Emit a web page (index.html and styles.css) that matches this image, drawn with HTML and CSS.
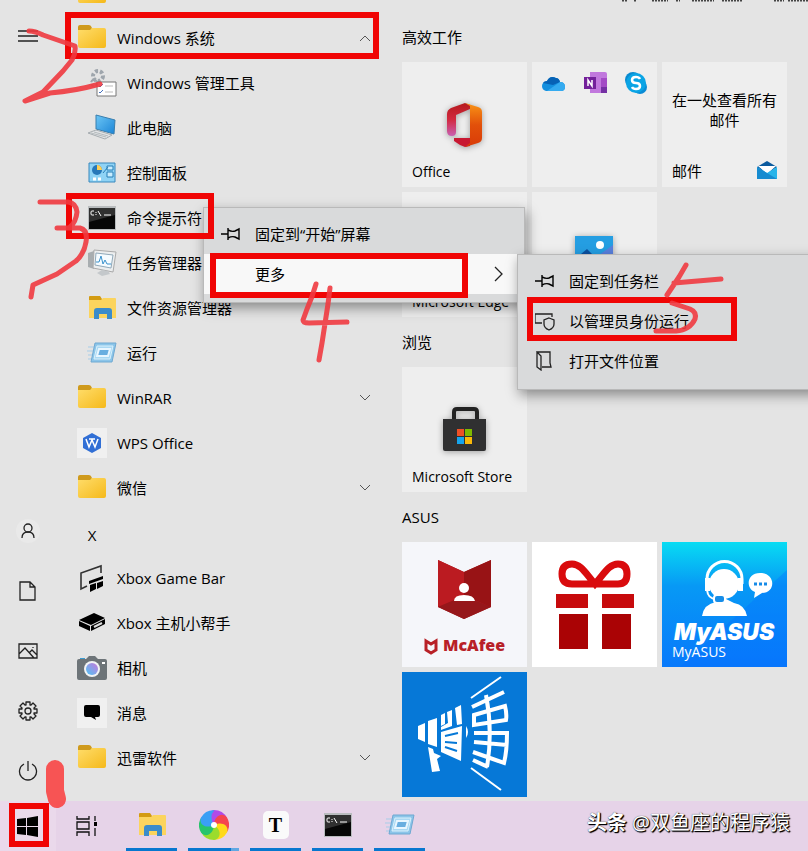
FILE: index.html
```
<!DOCTYPE html>
<html lang="zh-CN">
<head>
  <meta charset="UTF-8">
  <meta name="viewport" content="width=device-width, initial-scale=1.0">
  <title>开始</title>
  <link rel="stylesheet" href="styles.css">
</head>
<body>
  <!-- shared icons -->
  <svg class="defs" width="0" height="0" aria-hidden="true">
    <defs>
      <linearGradient id="folder-fill" x1="0" y1="0" x2="1" y2="1">
        <stop offset="0" stop-color="#ffdd6b"/><stop offset="1" stop-color="#f5b91a"/>
      </linearGradient>
      <linearGradient id="blue-fill" x1="0" y1="0" x2="1" y2="1">
        <stop offset="0" stop-color="#6cc6f5"/><stop offset="1" stop-color="#1b84d6"/>
      </linearGradient>
      <symbol id="folder" viewBox="0 0 30 30">
        <path d="M1 4q0-2 2-2h9q2 0 3 3l-2 4H1z" fill="#cf9a1c"/>
        <path d="M1 7h12l2-2h12q2 0 2 2v16q0 2-2 2H3q-2 0-2-2z" fill="url(#folder-fill)"/>
      </symbol>
      <symbol id="explorer" viewBox="0 0 30 30">
        <path d="M2 4q0-1 1-1h10l2 3v4H2z" fill="#d39b12"/>
        <path d="M2 7h12l2-2h12q1 0 1 1v19H2z" fill="#fbd45e"/>
        <path d="M7 26v-8q0-3 3-3h12q3 0 3 3v8h-5v-5h-8v5z" fill="#3b8ccb"/>
      </symbol>
      <symbol id="cmd" viewBox="0 0 30 30">
        <path d="M1 3h28v24H1z" fill="#b9bcbe"/>
        <path d="M2 5h26v21H2z" fill="#070707"/>
        <path d="M2 5h26v7L2 19z" fill="#303030"/>
        <path d="M7 8H5q-1 0-1 1v2q0 1 1 1h2M9 9v1M9 11v1M11 8l3 5M17 12h7" fill="none" stroke="#fff"/>
      </symbol>
      <symbol id="run" viewBox="0 0 30 30">
        <path d="M1 9h6M0 13h6M1 17h5M1 21h5" stroke="#a7cde8"/>
        <path d="M8 5h21l-4 19H4z" fill="#8cc5e9" stroke="#6fa9d2"/>
        <path d="M10 8h16l-3 13H7z" fill="#a9d8f3" stroke="#d9f0fb"/>
        <path d="M12 11h11l-2 7H10z" fill="#69aee0" stroke="#e8f6ff" stroke-width="2"/>
      </symbol>
      <symbol id="pin" viewBox="0 0 20 20">
        <path d="M0 10h7M7 4v12M7 6q4 2 7 1l4-2v10l-4-2q-3-1-7 1" fill="none" stroke="currentColor" stroke-width="1.4"/>
      </symbol>
      <symbol id="chevron" viewBox="0 0 12 12">
        <path d="M1 3l5 5 5-5" fill="none" stroke="#555"/>
      </symbol>
    </defs>
  </svg>

  <main class="start-menu">
    <nav class="rail" aria-label="开始">
      <button class="rail-btn rail-menu" aria-label="展开">
        <svg width="20" height="20" viewBox="0 0 20 20"><path d="M0 4h20M0 9h20M0 14h20"/></svg>
      </button>
      <button class="rail-btn" aria-label="帐户">
        <svg class="avatar" width="24" height="24" viewBox="0 0 24 24"><circle cx="12" cy="9" r="4"/><path d="M6 19q0-6 6-6t6 6"/></svg>
      </button>
      <button class="rail-btn" aria-label="文档">
        <svg width="20" height="20" viewBox="0 0 20 20"><path d="M2 1h10l5 5v13H2zM12 1v5h5"/></svg>
      </button>
      <button class="rail-btn" aria-label="图片">
        <svg width="20" height="20" viewBox="0 0 20 20"><path d="M1 3h18v14H1zM1 13l6-6 9 10M11 12l3-3 5 5"/><path d="M15 6v1"/></svg>
      </button>
      <button class="rail-btn" aria-label="设置">
        <svg width="20" height="20" viewBox="0 0 20 20"><circle cx="10" cy="10" r="3"/><path d="M8 4L8 1H12L12 4 13 4 15 2 18 5 16 7 16 8H19V12H16L16 13 18 15 15 18 13 16 12 16V19H8V16L7 16 5 18 2 15 4 13 4 12H1V8H4L4 7 2 5 5 2 7 4z" stroke-linejoin="round"/></svg>
      </button>
      <button class="rail-btn" aria-label="电源">
        <svg width="20" height="20" viewBox="0 0 20 20"><path d="M10 0v10M6 3a8.500 8.500 0 1 0 8 0"/></svg>
      </button>
    </nav>

    <section class="apps" aria-label="所有应用">
      <button class="app" aria-label="文件夹"><svg class="app-icon"><use href="#folder"/></svg></button>
      <button class="app"><svg class="app-icon"><use href="#folder"/></svg><span>Windows 系统</span><svg class="chevron up"><use href="#chevron"/></svg></button>
      <button class="app sub">
        <svg class="app-icon" viewBox="0 0 30 30">
          <g fill="none" stroke="#9fa6ad" stroke-dasharray="3 2"><circle cx="11" cy="8" r="5" stroke-width="4"/><circle cx="7" cy="15" r="3" stroke-width="2"/></g>
          <path d="M10 14h19v14H10z" fill="#fff" stroke="#777"/>
          <path d="M12 18l1 1 3-3M12 24l1 1 3-3" fill="none" stroke="#4771bd"/><path d="M18 18h8M18 24h8" stroke="#bbb"/>
        </svg><span>Windows 管理工具</span></button>
      <button class="app sub">
        <svg class="app-icon" viewBox="0 0 30 30">
          <path d="M9 2l19 5-1 14-18-5z" fill="url(#blue-fill)" stroke="#397eae"/>
          <path d="M1 20l8-3 16 5-7 4z" fill="#e3e5e7" stroke="#a7adb1"/><path d="M4 20l15 4M7 19l14 4" stroke="#b4babd"/>
        </svg><span>此电脑</span></button>
      <button class="app sub">
        <svg class="app-icon" viewBox="0 0 30 30">
          <path d="M2 5h26v19H2z" fill="#8fd3f5" stroke="#3888bd"/>
          <circle cx="10" cy="12" r="5" fill="#2778b9"/><path d="M10 12V7a5 5 0 0 1 5 5z" fill="#ffcf55"/>
          <path d="M16 15l5-6M20 8h6v4h-6zM20 14h6v5h-6z" fill="#c7edff" stroke="#277fb7"/><path d="M6 21h3M11 21h3" stroke="#fff" stroke-width="3"/>
        </svg><span>控制面板</span></button>
      <button class="app sub"><svg class="app-icon"><use href="#cmd"/></svg><span>命令提示符</span></button>
      <button class="app sub">
        <svg class="app-icon" viewBox="0 0 30 30">
          <path d="M1 5l6-2v18l-6-2z" fill="#a8adb0"/><path d="M7 2l22 2-3 20-20-4z" fill="#eceeef" stroke="#aaa"/>
          <path d="M9 5l17 2-2 13-16-3z" fill="#f5fbff" stroke="#91a9b9"/><path d="M9 14l3 0 2-6 2 8 2-4 2 4 4 0" fill="none" stroke="#3a92cd"/>
          <path d="M15 22l6 1 2 3-8 2-5-3z" fill="#c4c8cb"/>
        </svg><span>任务管理器</span></button>
      <button class="app sub"><svg class="app-icon"><use href="#explorer"/></svg><span>文件资源管理器</span></button>
      <button class="app sub"><svg class="app-icon"><use href="#run"/></svg><span>运行</span></button>
      <button class="app"><svg class="app-icon"><use href="#folder"/></svg><span>WinRAR</span><svg class="chevron"><use href="#chevron"/></svg></button>
      <button class="app">
        <svg class="app-icon plate" viewBox="0 0 30 30"><path d="M15 5l9 5v10l-9 5-9-5V10z" fill="#316fd5"/><path d="M9 11l3 8 3-7 3 7 3-8M12 11h6" fill="none" stroke="#fff" stroke-width="1.500"/></svg>
        <span>WPS Office</span></button>
      <button class="app"><svg class="app-icon"><use href="#folder"/></svg><span>微信</span><svg class="chevron"><use href="#chevron"/></svg></button>
      <h2 class="letter">X</h2>
      <button class="app">
        <svg class="app-icon" viewBox="0 0 30 30"><path d="M10 23l-6 3V10l20-7v7" fill="none" stroke="#333" stroke-width="1.600"/><path d="M12 18l14-5v3l-14 5zM13 22l6-2v6l-6 3zM20 20l6-2v5l-6 3z"/></svg>
        <span>Xbox Game Bar</span></button>
      <button class="app">
        <svg class="app-icon" viewBox="0 0 30 30"><path d="M2 12L17 5l11 5-14 7zM2 13l11 5v5L2 18zM14 18l14-7v5l-14 7z"/><path d="M17 19l8-4" stroke="#ddd" stroke-width="2"/></svg>
        <span>Xbox 主机小帮手</span></button>
      <button class="app">
        <svg class="app-icon" viewBox="0 0 30 30">
          <defs><linearGradient id="lens" x1="0" y1="1" x2="1" y2="0"><stop offset="0" stop-color="#4cc4f4"/><stop offset="1" stop-color="#c879dc"/></linearGradient></defs>
          <path d="M3 5h5v3H3z" fill="#3a9bd0"/><path d="M0 8q0-2 2-2h7l3-3h6l3 3h7q2 0 2 2v17q0 2-2 2H2q-2 0-2-2z" fill="#6d7478"/>
          <circle cx="15" cy="16" r="8" fill="#f2f4f5"/><circle cx="15" cy="16" r="6" fill="url(#lens)"/><path d="M25 10h3" stroke="#fff" stroke-width="2"/>
        </svg><span>相机</span></button>
      <button class="app">
        <svg class="app-icon plate" viewBox="0 0 30 30"><path d="M9 7h12q2 0 2 2v8q0 2-2 2h-3l1 3-5-3H9q-2 0-2-2V9q0-2 2-2z"/></svg>
        <span>消息</span></button>
      <button class="app"><svg class="app-icon"><use href="#folder"/></svg><span>迅雷软件</span><svg class="chevron"><use href="#chevron"/></svg></button>
      <h2 class="letter">Y</h2>
    </section>

    <section class="tiles" aria-label="磁贴">
      <h2 class="group-title">高效工作</h2>
      <div class="tile-grid">
        <a class="tile" href="#">
          <svg class="tile-art" viewBox="0 0 125 125">
            <defs><linearGradient id="office-l" x1="0" y1="0" x2="0" y2="1"><stop offset="0" stop-color="#b5191d"/><stop offset=".5" stop-color="#d2293f"/><stop offset="1" stop-color="#c960b2"/></linearGradient><linearGradient id="office-r" x1="0" y1="0" x2="0" y2="1"><stop offset="0" stop-color="#f99416"/><stop offset=".5" stop-color="#e2500a"/><stop offset="1" stop-color="#d93b08"/></linearGradient></defs>
            <g class="lift"><path d="M45 52q0-4 4-6l14-5 5 2v4l-14 6v17q0 4-4 4-5 0-5-5z" fill="url(#office-l)"/><path d="M52 76h16v8l-5 1q-6-2-11-6z" fill="#c81832"/><path d="M63 41l13 4q4 1 4 5v26q0 4-4 5l-13 4 5-4V44z" fill="url(#office-r)"/></g>
          </svg>
          <span class="tile-label">Office</span>
        </a>
        <a class="tile tile-folder" href="#" aria-label="应用文件夹">
          <svg viewBox="0 0 26 26"><path d="M6 21q-4-1-4-5t5-5q3-6 9-3 3 0 4 4 5 0 5 5 0 4-4 4z" fill="#1490df"/><path d="M3 13q1-2 4-2 3-6 9-3 3 0 4 4l-7 3z" fill="#0762b5"/><path d="M7 21l13-9q5 0 5 5 0 4-4 4z" fill="#35abf0"/></svg>
          <svg viewBox="0 0 26 26"><path d="M8 2h15q2 0 2 2v19H8z" fill="#c178dd"/><path d="M19 8h6v15h-6z" fill="#a34bc5"/><path d="M19 17h6v6h-6z" fill="#7430a3"/><path d="M2 7h12v12H2z" fill="#73209a"/><path d="M6 16v-6l4 6v-6" fill="none" stroke="#fff" stroke-width="1.500"/></svg>
          <svg viewBox="0 0 26 26"><circle cx="10" cy="10" r="8" fill="#098ad0"/><circle cx="17" cy="17" r="7" fill="#0a8bd5"/><circle cx="13" cy="13" r="10" fill="#0aa4e5"/><path d="M17 9q-1-2-4-2-4 0-4 3t4 3 4 3-4 3q-3 0-4-2" fill="none" stroke="#fff" stroke-width="2.500"/></svg>
        </a>
        <a class="tile tile-mail" href="#">
          <span class="tile-text">在一处查看所有邮件</span>
          <span class="tile-foot">邮件
            <svg width="20" height="20" viewBox="0 0 20 20"><path d="M0 6l10-6 10 6-10 7z" fill="#0b5a9e"/><path d="M1 5h18l-9 8z" fill="#fff"/><path d="M0 6l10 6 10-6v12H0z" fill="#27b4ea"/><path d="M0 6l20 12H0z" fill="#168bd0"/></svg>
          </span>
        </a>
        <a class="tile" href="#"><span class="tile-label">Microsoft Edge</span></a>
        <a class="tile" href="#" aria-label="照片">
          <svg class="tile-art" viewBox="0 0 125 125"><path d="M43 44h38v30H43z" fill="#259ee2" class="lift"/><path d="M43 67l12-10 14 14v3H43z" fill="#0b51a1"/><path d="M67 63l14-10v20H67z" fill="#5980dd"/><circle cx="68" cy="53" r="4" fill="#fff"/></svg>
        </a>
      </div>

      <h2 class="group-title">浏览</h2>
      <div class="tile-grid">
        <a class="tile" href="#">
          <svg class="tile-art" viewBox="0 0 125 125">
            <g class="lift"><path d="M52 54V45q0-3 3-3h17q3 0 3 3v9" fill="none" stroke="#222" stroke-width="4"/><path d="M41 52h43v30q0 2-2 2H43q-2 0-2-2z" fill="#303031"/></g>
            <path d="M55 62h7v7h-7z" fill="#ef5025"/><path d="M63 62h7v7h-7z" fill="#7fb900"/><path d="M55 70h7v7h-7z" fill="#16a4ec"/><path d="M63 70h7v7h-7z" fill="#fbb909"/>
          </svg>
          <span class="tile-label">Microsoft Store</span>
        </a>
      </div>

      <h2 class="group-title">ASUS</h2>
      <div class="tile-grid">
        <a class="tile tile-mcafee" href="#" aria-label="McAfee">
          <svg class="tile-art" viewBox="0 0 125 125">
            <path d="M36 18l26 12 27-12v47L62 77 36 65z" fill="#a81a1e"/><path d="M62 30l27-12v47L62 53z" fill="#981315"/><path d="M36 18l26 12v24L36 65z" fill="#bb1b21"/><path d="M62 54l27 11-27 12-26-12z" fill="#96171a"/>
            <circle cx="62" cy="46" r="5" fill="#fff"/><path d="M52 59q0-6 10-6t11 6z" fill="#fff"/>
            <path d="M24 99l5 3 5-3v9l-5 3-5-3z" fill="none" stroke="#b82027" stroke-width="3"/>
            <text class="mcafee-name" x="41" y="109">McAfee</text>
          </svg>
        </a>
        <a class="tile tile-gift" href="#" aria-label="礼品">
          <svg class="tile-art" viewBox="0 0 125 125">
            <path d="M63 42C54 32 49 22 40 22q-10 0-10 10 0 10 10 10h46q9 0 9-10 0-10-9-10c-9 0-14 10-23 20z" fill="none" stroke="#d90b0d" stroke-width="7"/>
            <path d="M24 52h32v14H24zM70 52h32v14H70z" fill="#c70a0c"/><path d="M27 72h29v35H27zM70 72h29v35H70z" fill="#aa0305"/>
          </svg>
        </a>
        <a class="tile tile-myasus" href="#">
          <svg class="tile-art" viewBox="0 0 125 125">
            <path d="M125 28L18 125H125z" fill="#056fff" opacity=".35"/>
            <circle cx="62" cy="42" r="15" fill="#fff"/><path d="M40 74q2-12 14-14l8-4 10 5q11 2 13 13z" fill="#fff"/>
            <path d="M45 42v-5a17 17 0 0 1 35 0v5" fill="none" stroke="#fff" stroke-width="3"/><path d="M43 36h5v13h-5zM76 36h5v13h-5z" fill="#fff"/>
            <path d="M45 48q1 9 9 9" fill="none" stroke="#fff" stroke-width="2"/><rect x="52" y="53" width="11" height="8" rx="3" fill="#168de8" stroke="#fff" stroke-width="2"/>
            <path d="M98 31c16 0 16 20 2 20l-8 5 1-6c-10-4-8-19 5-19z" fill="#fff"/><path d="M92 42h3M97 42h3M102 42h3" stroke="#168be8" stroke-width="3"/>
            <text class="myasus-name" x="12" y="98">MyASUS</text>
          </svg>
          <span class="tile-label">MyASUS</span>
        </a>
        <a class="tile tile-horn" href="#" aria-label="扬声器">
          <svg class="tile-art" viewBox="0 0 125 125">
            <path d="M16 54l7-3v19l-7-3zM26 49l9-3v29l-9-3zM26 75l5 2 1 4 7 3-4 3 3 12-8 1zM39 43l4-2v11l-4 2zM45 40l5-2v16l-11 4v-3l7-4zM53 36l6-3 1 19-5 1zM39 60l21-6-1 35-20-9z" fill="#fff"/>
            <path d="M43 64l13-3M43 70l12 1M43 75l12 4" stroke="#0678d7" stroke-width="2"/><path d="M64 54q4 6 0 12z" fill="#fff"/>
            <g fill="none" stroke="#fff" stroke-width="4"><path d="M70 35l32-15M84 23q7 36 1 72M72 43l31-9q2 8 1 14l-32 5zM72 61h33q0 18-3 30l-31-11M72 70l33 3M71 88l15 7"/><path d="M69 26L99 5M69 96l30 22" stroke-width="2"/></g>
          </svg>
        </a>
      </div>
    </section>
  </main>

  <footer class="taskbar">
    <button class="task start" aria-label="开始"><svg width="22" height="22" viewBox="0 0 22 22"><path d="M0 4l9-1v8H0zM10 3l11-2v10H10zM0 12h9v8l-9-1zM10 12h11v10l-11-2z"/></svg></button>
    <button class="task view" aria-label="任务视图"><svg width="22" height="22" viewBox="0 0 22 22"><path d="M1 1v3h12V1M1 21v-4h12v4M1 7h12v7H1zM19 1v5M19 13v8" fill="none" stroke="#111" stroke-width="1.300"/><path d="M18 7h3v4h-3z"/></svg></button>
    <div class="running">
      <button class="task open" aria-label="文件资源管理器"><svg class="app-icon"><use href="#explorer"/></svg></button>
      <button class="task open grouped" aria-label="浏览器">
        <svg class="app-icon" viewBox="0 0 30 30">
          <circle cx="15" cy="15" r="13" fill="#d86bb0"/>
          <path d="M15 15C7 10 8 1 15 0q9 0 13 8-8-2-13 7z" fill="#b04be8"/>
          <path d="M15 15C7 10 8 1 15 0q9 0 13 8-8-2-13 7z" fill="#f5454f" transform="rotate(60 15 15)"/>
          <path d="M15 15C7 10 8 1 15 0q9 0 13 8-8-2-13 7z" fill="#ffd91a" transform="rotate(120 15 15)"/>
          <path d="M15 15C7 10 8 1 15 0q9 0 13 8-8-2-13 7z" fill="#9bdc2c" transform="rotate(180 15 15)"/>
          <path d="M15 15C7 10 8 1 15 0q9 0 13 8-8-2-13 7z" fill="#27c46c" transform="rotate(240 15 15)"/>
          <path d="M15 15C7 10 8 1 15 0q9 0 13 8-8-2-13 7z" fill="#3a9ff5" transform="rotate(300 15 15)"/>
          <circle cx="15" cy="15" r="3" fill="#fff"/>
        </svg>
      </button>
      <button class="task open" aria-label="Typora"><span class="typora">T</span></button>
      <button class="task open" aria-label="命令提示符"><svg class="app-icon"><use href="#cmd"/></svg></button>
      <button class="task open" aria-label="运行"><svg class="app-icon"><use href="#run"/></svg></button>
    </div>
    <p class="credit"><b>头条</b> @双鱼座的程序猿</p>
  </footer>

  <div class="menu context-menu" role="menu">
    <button class="menu-item" role="menuitem"><svg><use href="#pin"/></svg>固定到“开始”屏幕</button>
    <button class="menu-item active" role="menuitem"><svg></svg>更多<svg class="more" viewBox="0 0 20 20"><path d="M7 3l7 7-7 7"/></svg></button>
  </div>
  <div class="menu sub-menu" role="menu">
    <button class="menu-item" role="menuitem"><svg><use href="#pin"/></svg>固定到任务栏</button>
    <button class="menu-item" role="menuitem"><svg viewBox="0 0 20 20"><path d="M7 12H0V3h17v3M14 7l5 2v4q0 4-5 6-5-2-5-6V9z"/></svg>以管理员身份运行</button>
    <button class="menu-item" role="menuitem"><svg viewBox="0 0 20 20"><path d="M2 1h13v11l1 4H7M2 1l4 4v14l-4-3z"/></svg>打开文件位置</button>
  </div>

  <!-- red step marks drawn over the desktop -->
  <svg class="marks" width="808" height="851" viewBox="0 0 808 851" aria-hidden="true">
    <path class="window-edge" d="M622 0h5M634 0h3M652 0h16M676 0h4M692 0h22M722 0h20M774 0h10M788 0h20"/>
    <g class="boxes">
      <rect x="68" y="15" width="308" height="41"/>
      <rect x="69" y="196" width="142" height="40"/>
      <rect x="213" y="256" width="252" height="39"/>
      <rect x="530" y="300" width="204" height="38"/>
      <rect x="12" y="806" width="34" height="38"/>
    </g>
    <g class="strokes">
      <path d="M29 31Q35 31 43 35L75 46Q76 53 72 60L63 71 43 92 25 101 50 93Q75 91 100 84"/>
      <path d="M40 202L68 202Q76 203 77 212 76 222 70 227M57 228H80Q88 230 86 242 84 254 76 261L57 274 33 285 31 297"/>
      <path d="M316 284Q312 298 307 309L303 320Q303 323 309 323L347 322M330 288L328 304 322 343 319 360"/>
      <path d="M686 265L679 277 667 295M674 283L721 279M672 303L690 309Q697 312 695 319 690 330 676 331H656"/>
      <path class="blob" d="M55 769v22l2 8"/>
    </g>
  </svg>
</body>
</html>
```
FILE: styles.css
```
* {
  box-sizing: border-box;
}

body {
  position: relative;
  display: flex;
  flex-direction: column;
  height: 100vh;
  margin: 0;
  overflow: hidden;
  background: #e4e4e4;
  color: #000;
  font-family: "Open Sans", "Noto Sans CJK SC", sans-serif;
  font-size: 15px;
  line-height: 20px;
}

button {
  padding: 0;
  border: 0;
  background: none;
  color: inherit;
  font: inherit;
  text-align: left;
}

a {
  color: inherit;
  text-decoration: none;
}

.defs {
  position: absolute;
}

.start-menu {
  display: grid;
  grid-template-columns: 56px 321px 1fr;
  flex: 1;
  min-height: 0;
}

/* left rail */
.rail {
  display: flex;
  flex-direction: column;
}

.rail-btn {
  display: flex;
  align-items: center;
  justify-content: center;
  height: 60px;
}

.rail-menu {
  height: 74px;
  margin-bottom: auto;
}

.rail-btn svg {
  fill: none;
  stroke: #222;
  stroke-width: 1.3;
}

.rail-btn .avatar {
  border-radius: 50%;
  background: #e9e9e9;
}

/* app list, scrolled part of the way down */
.apps {
  display: flex;
  flex-direction: column;
  margin-top: -30px;
  padding-left: 21px;
  overflow: hidden;
}

.app {
  display: flex;
  flex: none;
  align-items: center;
  gap: 10px;
  height: 45px;
  padding-right: 6px;
}

.app.sub {
  padding-left: 10px;
}

.app-icon {
  width: 30px;
  height: 30px;
}

.plate {
  background: #f0f0f0;
}

.chevron {
  width: 12px;
  height: 12px;
  margin-left: auto;
}

.chevron.up {
  transform: rotate(180deg);
}

.letter {
  flex: none;
  width: 30px;
  height: 45px;
  margin: 0;
  font-weight: normal;
  font-size: 15px;
  line-height: 50px;
  text-align: center;
}

/* tiles */
.tiles {
  padding: 12px 21px 0 25px;
  overflow: hidden;
}

.group-title {
  margin: 0;
  font-weight: normal;
  font-size: 15px;
  line-height: 50px;
}

.tile-grid {
  display: grid;
  grid-template-columns: repeat(3, 125px);
  grid-auto-rows: 125px;
  gap: 5px;
}

.tile {
  display: grid;
  background: #eee;
}

.tile-art,
.tile-label {
  grid-area: 1 / 1;
}

.tile-label {
  align-self: end;
  padding: 0 0 5px 10px;
  font-size: 14px;
  white-space: nowrap;
}

.lift {
  filter: drop-shadow(0 1px 3px #0005);
}

.tile-folder {
  grid-template-columns: repeat(3, 26px);
  justify-content: space-between;
  padding: 8px;
}

.tile-folder svg {
  width: 26px;
  height: 26px;
}

.tile-mail {
  display: flex;
  flex-direction: column;
  justify-content: space-between;
  padding: 28px 10px 6px;
}

.tile-text {
  text-align: center;
}

.tile-foot {
  display: flex;
  align-items: center;
  justify-content: space-between;
}

.tile-mcafee {
  background: #f5f6fa;
}

.tile-gift {
  background: #fff;
}

.tile-myasus {
  background: linear-gradient(#08dcf3, #0799f5 35%, #0879fb);
  color: #fff;
}

.tile-horn {
  background: #0678d7;
}

.mcafee-name {
  fill: #b82027;
  font: 800 16px "Open Sans", sans-serif;
}

.myasus-name {
  fill: #fff;
  font: italic 900 23px Inter, sans-serif;
}

/* taskbar */
.taskbar {
  display: flex;
  height: 50px;
  background: #e6d3e8;
}

.task {
  display: flex;
  align-items: center;
  justify-content: center;
  width: 51px;
}

.task.start {
  width: 56px;
  background: #ead9eb;
}

.task.view {
  width: 62px;
}

.running {
  display: flex;
  gap: 11px;
  padding-left: 8px;
}

.task.open {
  border-bottom: 3px solid #0877cf;
}

.task.grouped {
  border-image: linear-gradient(90deg, #0877cf 80%, #62a8e3 80%) 3;
}

.typora {
  width: 26px;
  height: 28px;
  border-radius: 5px;
  background: #fafafa;
  font: bold 20px/28px "Liberation Serif", serif;
  text-align: center;
}

.credit {
  margin: 0 18px 0 auto;
  color: #fff;
  font-size: 20px;
  line-height: 44px;
  text-shadow: 1px 1px 1px #000, 1px 1px 1px #000, 0 0 1px #333;
  white-space: nowrap;
}

/* right-click menus */
.menu {
  position: absolute;
  padding: 6px 0 8px;
  border: 1px solid #b9b9b9;
  background: #d9dadb;
  box-shadow: 2px 5px 12px #0006;
}

.context-menu {
  top: 207px;
  left: 203px;
  width: 322px;
}

.sub-menu {
  top: 254px;
  left: 517px;
  right: -10px;
}

.menu-item {
  display: flex;
  align-items: center;
  gap: 14px;
  width: 100%;
  height: 40px;
  padding: 0 16px 0 17px;
}

.menu-item svg {
  width: 20px;
  height: 20px;
  fill: none;
  stroke: #222;
  stroke-width: 1.3;
}

.menu-item .more {
  margin-left: auto;
}

.menu-item.active {
  background: #f8f8f8;
}

/* step marks */
.marks {
  position: absolute;
  top: 0;
  left: 0;
  pointer-events: none;
}

.window-edge {
  stroke: #444;
  stroke-width: 3;
  stroke-dasharray: 2 1;
}

.boxes {
  fill: none;
  stroke: #f00505;
  stroke-width: 6;
}

.strokes {
  fill: none;
  stroke: #f03a40;
  stroke-width: 5;
  stroke-linecap: round;
  stroke-linejoin: round;
  opacity: .9;
}

.blob {
  stroke: #f84444;
  stroke-width: 18;
}
```
